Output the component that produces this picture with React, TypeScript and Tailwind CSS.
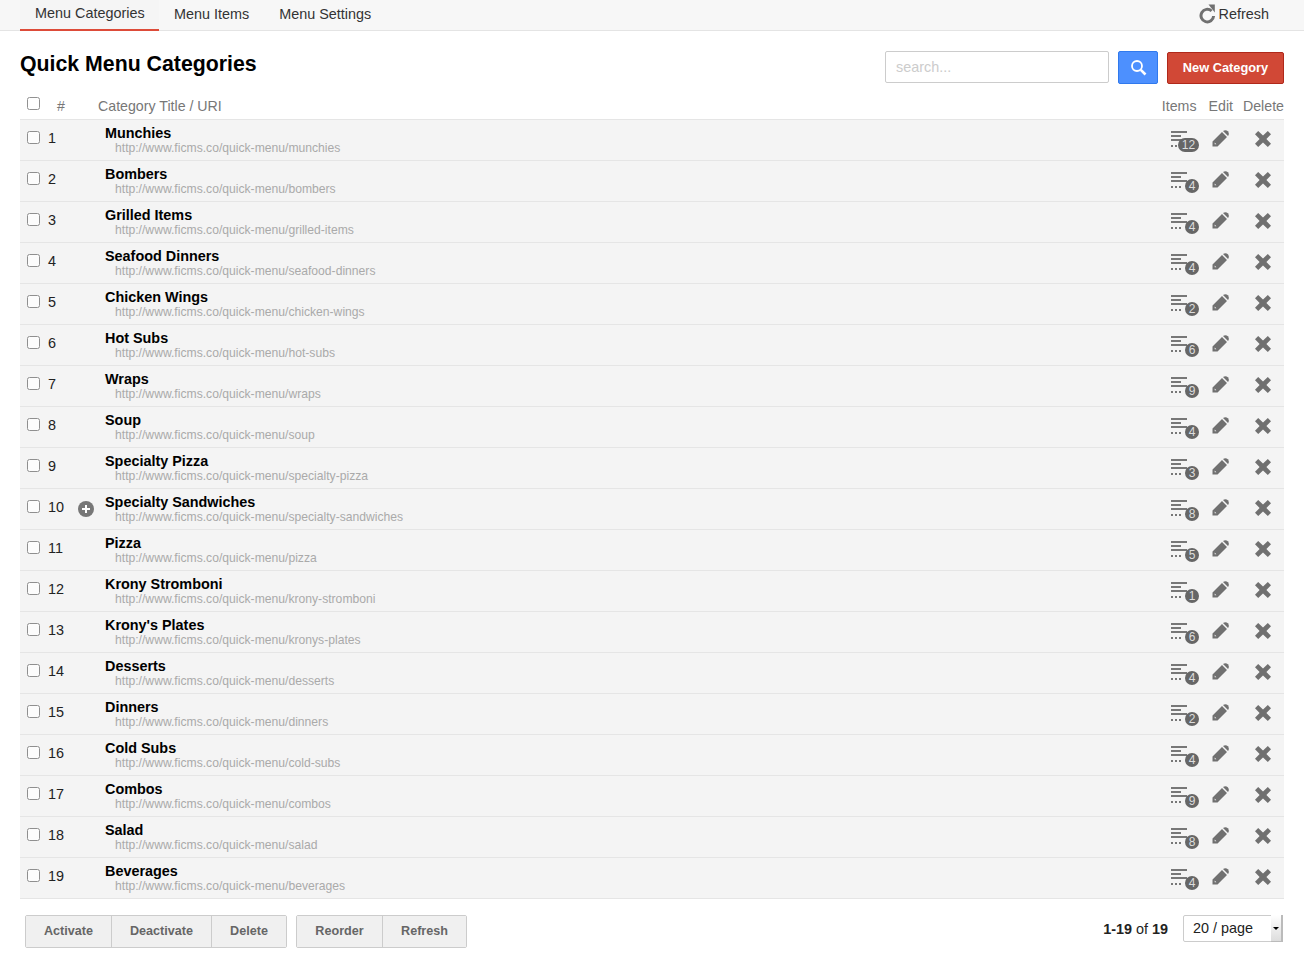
import React from "react";

const cats: [string, string, number][] = [
  ["Munchies", "munchies", 12],
  ["Bombers", "bombers", 4],
  ["Grilled Items", "grilled-items", 4],
  ["Seafood Dinners", "seafood-dinners", 4],
  ["Chicken Wings", "chicken-wings", 2],
  ["Hot Subs", "hot-subs", 6],
  ["Wraps", "wraps", 9],
  ["Soup", "soup", 4],
  ["Specialty Pizza", "specialty-pizza", 3],
  ["Specialty Sandwiches", "specialty-sandwiches", 8],
  ["Pizza", "pizza", 5],
  ["Krony Stromboni", "krony-stromboni", 1],
  ["Krony's Plates", "kronys-plates", 6],
  ["Desserts", "desserts", 4],
  ["Dinners", "dinners", 2],
  ["Cold Subs", "cold-subs", 4],
  ["Combos", "combos", 9],
  ["Salad", "salad", 8],
  ["Beverages", "beverages", 4],
];

function ItemsIcon({ n }: { n: number }) {
  return (
    <div className="relative w-[28px] h-[24px]">
      <svg width="18" height="18" viewBox="0 0 18 18" className="absolute left-0 top-0" fill="#777">
        <rect x="0" y="1" width="16" height="2" />
        <rect x="0" y="5" width="10" height="2" />
        <rect x="0" y="9" width="16" height="2" />
        <rect x="0" y="15" width="2" height="2" />
        <rect x="4" y="15" width="2" height="2" />
        <rect x="8" y="15" width="2" height="2" />
      </svg>
      <span
        className={`absolute top-[8px] right-0 h-[14px] rounded-full bg-[#666] text-[#ddd] text-[12px] leading-[14px] text-center ${
          n > 9 ? "w-[21px]" : "w-[14px]"
        }`}
      >
        {n}
      </span>
    </div>
  );
}

function Pencil() {
  return (
    <svg width="17" height="17" viewBox="0 0 17 17" fill="#707070">
      <path
        d="M0.5 11.5 L10 2 L15 7 L5.5 16.5 L0.5 16.5 Z M2.7 12.6 L2.7 14.3 L4.4 14.3 Z"
        fillRule="evenodd"
      />
      <path d="M11 1 C12.7 -0.3 14.6 0 15.8 1.2 C17 2.4 17.3 4.3 16 6 Z" />
    </svg>
  );
}

function Cross() {
  return (
    <svg width="16" height="16" viewBox="0 0 16 16" fill="#707070">
      <path d="M3.2 0 L8 4.6 L12.8 0 L16 3.2 L11.4 8 L16 12.8 L12.8 16 L8 11.4 L3.2 16 L0 12.8 L4.6 8 L0 3.2 Z" />
    </svg>
  );
}

function Row({ i, title, slug, n }: { i: number; title: string; slug: string; n: number }) {
  return (
    <div className="flex h-[41px] items-start bg-[#f4f4f4] border-b border-[#e5e5e5]">
      <div className="w-[28px] pl-[7px] pt-[11px] h-full shrink-0">
        <input type="checkbox" className="block w-[13px] h-[13px] m-0 opacity-80" />
      </div>
      <div className="w-[30px] pt-[10px] text-[14.4px] leading-[17px] text-[#222] shrink-0">{i}</div>
      <div className="w-[27px] pt-[12px] shrink-0">
        {i === 10 && (
          <svg width="16" height="16" viewBox="0 0 16 16">
            <circle cx="8" cy="8" r="8" fill="#777" />
            <path d="M7 4h2v3h3v2H9v3H7V9H4V7h3z" fill="#fff" />
          </svg>
        )}
      </div>
      <div className="flex-1 pt-[4px]">
        <div className="text-[14.4px] font-bold leading-[18px] text-black">{title}</div>
        <div className="pl-[10px] text-[12.15px] leading-[12px] text-[#aaa]">
          http://www.ficms.co/quick-menu/{slug}
        </div>
      </div>
      <div className="w-[28px] pt-[10px] shrink-0">
        <ItemsIcon n={n} />
      </div>
      <div className="w-[14px] shrink-0" />
      <div className="w-[42px] pt-[10px] shrink-0 -ml-[1px]">
        <Pencil />
      </div>
      <div className="w-[29px] pt-[11px] shrink-0 ml-[1px]">
        <Cross />
      </div>
    </div>
  );
}

function GroupButton({ label, width, last }: { label: string; width: string; last?: boolean }) {
  return (
    <button
      className={`h-full ${width} bg-[#f0f0f0] text-[12.6px] font-bold text-[#666] ${
        last ? "" : "border-r border-[#ccc]"
      }`}
    >
      {label}
    </button>
  );
}

export default function App() {
  return (
    <div className="font-['Liberation_Sans',Arial,sans-serif] bg-white min-h-[955px]">
      <nav className="flex h-[31px] bg-[#f7f7f7] border-b border-[#e4e4e4] pl-[20px] pr-[35px] text-[14.4px] text-[#333]">
        <div className="h-[31px] w-[139px] pl-[15px] pt-[4px] leading-[18px] border-b-2 border-[#dd4b39] bg-[#f5f5f5]">
          Menu Categories
        </div>
        <div className="px-[15px] pt-[5px] leading-[18px]">Menu Items</div>
        <div className="px-[15px] pt-[5px] leading-[18px]">Menu Settings</div>
        <div className="ml-auto flex items-start pt-[5px] leading-[18px]">
          <svg width="17" height="20" viewBox="0 0 17 20" className="mr-[3px] -mt-[1px]" fill="none">
            <path d="M12.6 7 A6.3 6.3 0 1 0 14.6 12" stroke="#707070" strokeWidth="3" />
            <path d="M9.5 0.5 L15.8 0.5 L15.8 8.5 Z" fill="#707070" />
          </svg>
          Refresh
        </div>
      </nav>

      <div className="px-[20px]">
        <div className="flex items-start h-[66px] pt-[20px]">
          <h1 className="text-[21.3px] font-bold text-black leading-[26px]">Quick Menu Categories</h1>
          <input
            placeholder="search..."
            className="ml-auto w-[224px] h-[32px] border border-[#ccc] rounded-[2px] px-[10px] text-[14.4px] placeholder:text-[#ccc] bg-white outline-none"
          />
          <button className="ml-[9px] w-[40px] h-[33px] bg-[#4d90fe] border border-[#3079ed] rounded-[2px] flex items-center justify-center">
            <svg width="17" height="17" viewBox="0 0 17 17" fill="none" stroke="#fff">
              <circle cx="7" cy="7" r="5" strokeWidth="1.8" />
              <path d="M10.8 10.8 L15.5 15.5" strokeWidth="2.6" />
            </svg>
          </button>
          <button className="ml-[9px] mt-[1px] w-[117px] h-[32px] bg-[#d14836] border border-[#b0281a] rounded-[2px] text-white text-[12.8px] font-bold">
            New Category
          </button>
        </div>

        <div className="flex h-[23px] text-[14.2px] leading-[17px] text-[#777] border-b border-[#e5e5e5]">
          <div className="w-[37px] pl-[7px]">
            <input type="checkbox" className="block w-[13px] h-[13px] m-0 opacity-80" />
          </div>
          <div className="w-[41px] pt-[1px]">#</div>
          <div className="flex-1 pt-[1px]">Category Title / URI</div>
          <div className="pt-[1px]">Items</div>
          <div className="pt-[1px] ml-[12px]">Edit</div>
          <div className="pt-[1px] ml-[10px]">Delete</div>
        </div>

        {cats.map(([t, s, n], idx) => (
          <Row key={s} i={idx + 1} title={t} slug={s} n={n} />
        ))}

        <div className="flex items-start pt-[16px] pl-[5px]">
          <div className="flex h-[33px] border border-[#ccc] rounded-[2px] overflow-hidden">
            <GroupButton label="Activate" width="w-[86px]" />
            <GroupButton label="Deactivate" width="w-[100px]" />
            <GroupButton label="Delete" width="w-[74px]" last />
          </div>
          <div className="flex h-[33px] ml-[9px] border border-[#ccc] rounded-[2px] overflow-hidden">
            <GroupButton label="Reorder" width="w-[86px]" />
            <GroupButton label="Refresh" width="w-[83px]" last />
          </div>
          <div className="ml-auto pt-[6px] text-[14.4px] leading-[17px] text-[#222]">
            <b>1-19</b> of <b>19</b>
          </div>
          <div className="relative ml-[15px] mr-[1px] w-[100px] h-[27px]">
            <select className="block w-full h-full border border-[#ccc] rounded-[2px] pl-[9px] pt-[1px] text-[14.4px] text-[#222] bg-white appearance-none outline-none">
              <option>20 / page</option>
            </select>
            <div className="absolute right-0 top-0 w-[12px] h-[27px] flex items-center justify-center bg-gradient-to-b from-white to-[#ddd] border-r-2 border-b border-r-[#bbb] border-b-[#bbb]">
              <div className="w-0 h-0 border-x-[3px] border-x-transparent border-t-[3px] border-t-black" />
            </div>
          </div>
        </div>
      </div>
    </div>
  );
}
